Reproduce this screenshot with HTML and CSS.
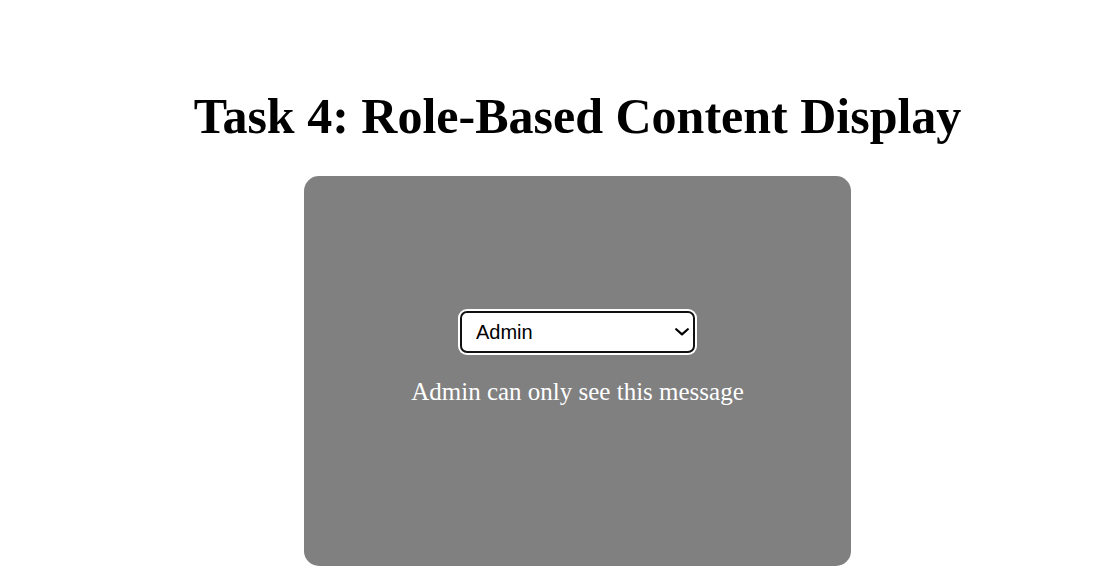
FILE: index.html
```html
<!DOCTYPE html>
<html lang="en">
<head>
<meta charset="utf-8">
<title>Task 4: Role-Based Content Display</title>
<link rel="stylesheet" href="styles.css">
</head>
<body>
<main class="page">
  <h1 class="title">Task 4: Role-Based Content Display</h1>
  <section class="card">
    <div class="select-wrap">
      <select class="role-select">
        <option>Admin</option>
        <option>User</option>
        <option>Guest</option>
      </select>
      <svg class="chevron" width="14" height="8" viewBox="0 0 14 8" aria-hidden="true">
        <polyline points="1.2,1.2 7,6.4 12.8,1.2" fill="none" stroke="#000" stroke-width="2.2" stroke-linecap="round" stroke-linejoin="round"/>
      </svg>
    </div>
    <p class="message">Admin can only see this message</p>
  </section>
</main>
</body>
</html>
```

FILE: styles.css
```css
html, body {
  margin: 0;
  padding: 0;
  background: #ffffff;
}

.page {
  display: flex;
  flex-direction: column;
  align-items: center;
  padding: 88px 0 0 42px;
  font-family: "Liberation Serif", "Times New Roman", serif;
}

.title {
  margin: 0 0 32px;
  font-size: 50px;
  font-weight: bold;
  color: #000000;
  line-height: 56px;
}

.card {
  width: 547px;
  height: 390px;
  box-sizing: border-box;
  background: #808080;
  border-radius: 15px;
  display: flex;
  flex-direction: column;
  align-items: center;
  justify-content: center;
}

.select-wrap {
  position: relative;
  display: flex;
}

.role-select {
  -webkit-appearance: none;
  appearance: none;
  width: 235px;
  height: 42px;
  box-sizing: border-box;
  padding: 0 30px 0 14px;
  font-family: "Liberation Sans", Arial, sans-serif;
  font-size: 20px;
  color: #000000;
  background: #ffffff;
  border: 2.5px solid #101010;
  border-radius: 7px;
  box-shadow: 0 0 0 2px #ffffff;
  outline: none;
}

.chevron {
  position: absolute;
  right: 6px;
  top: 17px;
  pointer-events: none;
}

.message {
  margin: 25px 0;
  font-size: 25px;
  color: #ffffff;
}
```
